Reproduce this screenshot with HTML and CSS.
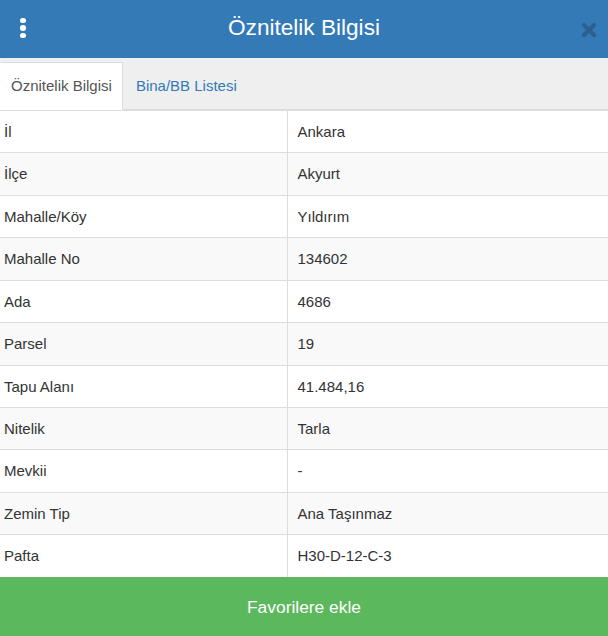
FILE: index.html
```html
<!DOCTYPE html>
<html lang="tr">
<head>
<meta charset="utf-8">
<title>Öznitelik Bilgisi</title>
<link rel="stylesheet" href="styles.css">
</head>
<body>
<div class="panel">
  <header class="header">
    <button class="menu-btn" aria-label="Menü">
      <span class="dot"></span><span class="dot"></span><span class="dot"></span>
    </button>
    <h1 class="title">Öznitelik Bilgisi</h1>
    <button class="close-btn" aria-label="Kapat">
      <svg width="16" height="16" viewBox="0 0 16 16"><path d="M3 3 L13 13 M13 3 L3 13" stroke="currentColor" stroke-width="4.2" stroke-linecap="round"/></svg>
    </button>
  </header>
  <nav class="tabs">
    <a class="tab active">Öznitelik Bilgisi</a>
    <a class="tab">Bina/BB Listesi</a>
  </nav>
  <table class="attr-table">
    <tbody>
      <tr><td class="key">İl</td><td class="val">Ankara</td></tr>
      <tr><td class="key">İlçe</td><td class="val">Akyurt</td></tr>
      <tr><td class="key">Mahalle/Köy</td><td class="val">Yıldırım</td></tr>
      <tr><td class="key">Mahalle No</td><td class="val">134602</td></tr>
      <tr><td class="key">Ada</td><td class="val">4686</td></tr>
      <tr><td class="key">Parsel</td><td class="val">19</td></tr>
      <tr><td class="key">Tapu Alanı</td><td class="val">41.484,16</td></tr>
      <tr><td class="key">Nitelik</td><td class="val">Tarla</td></tr>
      <tr><td class="key">Mevkii</td><td class="val">-</td></tr>
      <tr><td class="key">Zemin Tip</td><td class="val">Ana Taşınmaz</td></tr>
      <tr><td class="key">Pafta</td><td class="val">H30-D-12-C-3</td></tr>
    </tbody>
  </table>
  <button class="fav-btn">Favorilere ekle</button>
</div>
</body>
</html>
```
FILE: styles.css
```css
* { box-sizing: border-box; }
html, body { margin: 0; padding: 0; }
body {
  font-family: "Liberation Sans", Arial, sans-serif;
  color: #333;
  background: #fff;
  width: 608px;
  height: 636px;
  overflow: hidden;
}
.panel {
  display: flex;
  flex-direction: column;
  height: 636px;
}
.header {
  height: 58px;
  background: #337ab7;
  display: flex;
  align-items: center;
  flex: none;
}
.menu-btn {
  width: 46px;
  height: 58px;
  border: 0;
  background: transparent;
  padding: 0 0 2px 0;
  display: flex;
  flex-direction: column;
  align-items: center;
  justify-content: center;
  gap: 2px;
}
.dot {
  width: 5.5px;
  height: 5.5px;
  border-radius: 50%;
  background: #fff;
}
.title {
  flex: 1;
  margin: 0;
  text-align: center;
  color: #fff;
  font-weight: normal;
  font-size: 22.6px;
  line-height: 30px;
  padding-bottom: 2px;
}
.close-btn {
  width: 46px;
  height: 58px;
  border: 0;
  background: transparent;
  padding: 0 3px 0 11px;
  color: #2b5f90;
  display: flex;
  align-items: center;
  justify-content: center;
}
.close-btn svg { display: block; margin-top: 1px; }
.tabs {
  height: 52px;
  background: #efefef;
  border-bottom: 1px solid #ddd;
  display: flex;
  align-items: flex-end;
  flex: none;
}
.tab {
  display: block;
  font-size: 15px;
  line-height: 21.4px;
  padding: 12px 10px 13px;
  margin-right: 2px;
  margin-bottom: -1px;
  border: 1px solid transparent;
  color: #337ab7;
  cursor: pointer;
}
.tab.active {
  background: #fff;
  color: #555;
  border-color: #ddd;
  border-left-color: transparent;
  border-bottom-color: #fff;
}
.attr-table {
  width: 100%;
  border-collapse: collapse;
  font-size: 15px;
  line-height: 1.42857;
  flex: none;
}
.attr-table td {
  border-top: 1px solid #ddd;
  padding: 10px 10px;
  vertical-align: top;
}
.attr-table tr:nth-child(even) td { background: #f9f9f9; }
.attr-table td.key {
  width: 287px;
  padding-left: 4px;
  border-right: 1px solid #ddd;
}
.fav-btn {
  flex: 1;
  border: 0;
  background: #5cb85c;
  color: #fff;
  font-family: "Liberation Sans", Arial, sans-serif;
  font-size: 17.4px;
  padding: 3px 0 0 0;
  margin: 0;
  width: 100%;
}
```
